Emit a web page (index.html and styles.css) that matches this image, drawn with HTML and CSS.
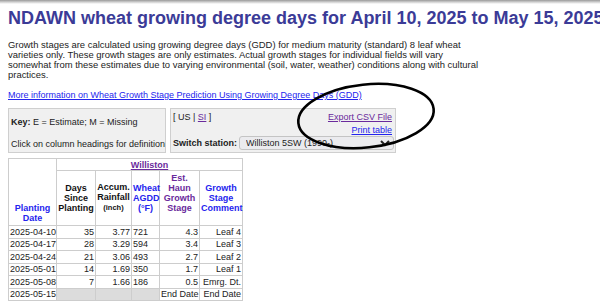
FILE: index.html
```html
<!DOCTYPE html>
<html lang="en">
  <head>
    <meta charset="UTF-8" />
    <meta name="viewport" content="width=device-width, initial-scale=1.0" />
    <title>NDAWN Wheat Growing Degree Days</title>
    <link rel="stylesheet" href="styles.css">
  </head>

  <body>
    <div class="topbar"></div>
    <div class="page">
      <h1>NDAWN wheat growing degree days for April 10, 2025 to May 15, 2025</h1>

      <p class="intro">
        Growth stages are calculated using growing degree days (GDD) for medium maturity (standard) 8 leaf wheat<br />
        varieties only. These growth stages are only estimates. Actual growth stages for individual fields will vary<br />
        somewhat from these estimates due to varying environmental (soil, water, weather) conditions along with cultural<br />
        practices.
      </p>

      <a class="more" href="#">More information on Wheat Growth Stage Prediction Using Growing Degree Days (GDD)</a>

      <div class="controls">
        <div class="box key">
          <div><b>Key:</b> E = Estimate; M = Missing</div>
          <div>Click on column headings for definition</div>
        </div>

        <div class="box options">
          <div class="options-top">
            <div class="units">[ US | <a class="visited" href="#">SI</a> ]</div>
            <div class="links">
              <a class="visited" href="#">Export CSV File</a>
              <a href="#">Print table</a>
            </div>
          </div>
          <div class="station">
            <label for="station">Switch station:</label>
            <select id="station">
              <option>Williston 5SW (1990-)</option>
            </select>
          </div>
        </div>

        <svg class="circle" width="160" height="80" viewBox="0 0 160 80">
          <ellipse cx="80" cy="40" rx="68" ry="31.5" transform="rotate(-6 80 40)"
            fill="none" stroke="#000" stroke-width="2.6" />
        </svg>
      </div>

      <table class="gdd">
        <colgroup>
          <col style="width: 48px" />
          <col style="width: 39px" />
          <col style="width: 36px" />
          <col style="width: 28px" />
          <col style="width: 40px" />
          <col style="width: 43px" />
        </colgroup>
        <thead>
          <tr>
            <th rowspan="2" class="date-head"><span class="blue">Planting<br />Date</span></th>
            <th colspan="5" class="station-head"><a class="visited" href="#">Williston</a></th>
          </tr>
          <tr class="heads">
            <th>Days<br />Since<br />Planting</th>
            <th>Accum.<br />Rainfall<br /><span class="unit">(inch)</span></th>
            <th class="blue">Wheat<br />AGDD<br />(°F)</th>
            <th class="purple">Est.<br />Haun<br />Growth<br />Stage</th>
            <th class="blue">Growth<br />Stage<br />Comment</th>
          </tr>
        </thead>
        <tbody>
          <tr><td>2025-04-10</td><td class="num">35</td><td class="num">3.77</td><td>721</td><td class="num">4.3</td><td class="num">Leaf 4</td></tr>
          <tr><td>2025-04-17</td><td class="num">28</td><td class="num">3.29</td><td>594</td><td class="num">3.4</td><td class="num">Leaf 3</td></tr>
          <tr><td>2025-04-24</td><td class="num">21</td><td class="num">3.06</td><td>493</td><td class="num">2.7</td><td class="num">Leaf 2</td></tr>
          <tr><td>2025-05-01</td><td class="num">14</td><td class="num">1.69</td><td>350</td><td class="num">1.7</td><td class="num">Leaf 1</td></tr>
          <tr><td>2025-05-08</td><td class="num">7</td><td class="num">1.66</td><td>186</td><td class="num">0.5</td><td class="num">Emrg. Dt.</td></tr>
          <tr><td>2025-05-15</td><td class="empty"></td><td class="empty"></td><td class="empty"></td><td class="num">End Date</td><td class="num">End Date</td></tr>
        </tbody>
      </table>
    </div>
  </body>
</html>
```

FILE: styles.css
```css
body {
  margin: 0;
  padding: 0;
  font-family: "Liberation Sans", Arial, sans-serif;
  background-color: #fff;
  color: #222;
}

.topbar {
  height: 4px;
  background: linear-gradient(#9a9a9a, #d8d8d8 60%, #fff);
}

.page {
  padding: 0 8px;
}

h1 {
  margin: 4px 0 0;
  font-size: 18px;
  line-height: 20px;
  font-weight: bold;
  color: #3b3b97;
  white-space: nowrap;
}

a {
  color: #2424ee;
}

a.visited,
.purple {
  color: #6a2a9c;
}

.blue {
  color: #2424ee;
}

.intro {
  margin: 12px 0 0;
  font-size: 9.45px;
  line-height: 10.15px;
  white-space: nowrap;
}

.more {
  display: block;
  margin-top: 9.5px;
  font-size: 9px;
  line-height: 10px;
  width: max-content;
}

.controls {
  position: relative;
  display: flex;
  gap: 4px;
  margin-top: 8px;
  font-size: 9px;
  line-height: 10px;
}

.box {
  background-color: #f0f0f0;
  border: 1px solid #cfcfcf;
  height: 45px;
  box-sizing: border-box;
}

.key {
  width: 158px;
  padding: 8px 1px 0 2px;
  display: flex;
  flex-direction: column;
  gap: 11.5px;
  white-space: nowrap;
}

.options {
  width: 226px;
  padding: 3px 3px 0 2px;
}

.options-top {
  display: flex;
  justify-content: space-between;
}

.links {
  display: flex;
  flex-direction: column;
  align-items: flex-end;
  gap: 3.3px;
}

.station {
  display: flex;
  align-items: center;
  gap: 2px;
  margin-top: 1px;
}

.station label {
  font-weight: bold;
  white-space: nowrap;
}

.station select {
  flex: none;
  width: 155px;
  height: 14px;
  padding: 0 2px;
  font-family: inherit;
  font-size: 9px;
  color: #222;
  background-color: #ebebee;
  border: 1px solid #c4c4c4;
  border-radius: 3px;
}

.circle {
  position: absolute;
  left: 278px;
  top: -32px;
  pointer-events: none;
}

.gdd {
  margin-top: 5px;
  border-collapse: collapse;
  table-layout: fixed;
  width: 234px;
  font-size: 9px;
  line-height: 10px;
}

.gdd th,
.gdd td {
  border: 1px solid #cdcdcd;
  padding: 0 1px;
}

.gdd th {
  font-weight: bold;
  text-align: center;
  vertical-align: bottom;
}

.station-head {
  height: 11px;
  padding: 1px 0 0;
}

.date-head {
  padding-bottom: 2px !important;
}

.heads th {
  height: 42px;
  padding-bottom: 12px;
  color: #111;
}

.heads th.blue {
  color: #2424ee;
}

.heads th.purple {
  color: #6a2a9c;
}

.unit {
  font-size: 7.5px;
}

.gdd td {
  height: 11.5px;
  white-space: nowrap;
  color: #222;
}

.gdd td.num {
  text-align: right;
}

.gdd td.empty {
  background-color: #dcdcdc;
}
```
